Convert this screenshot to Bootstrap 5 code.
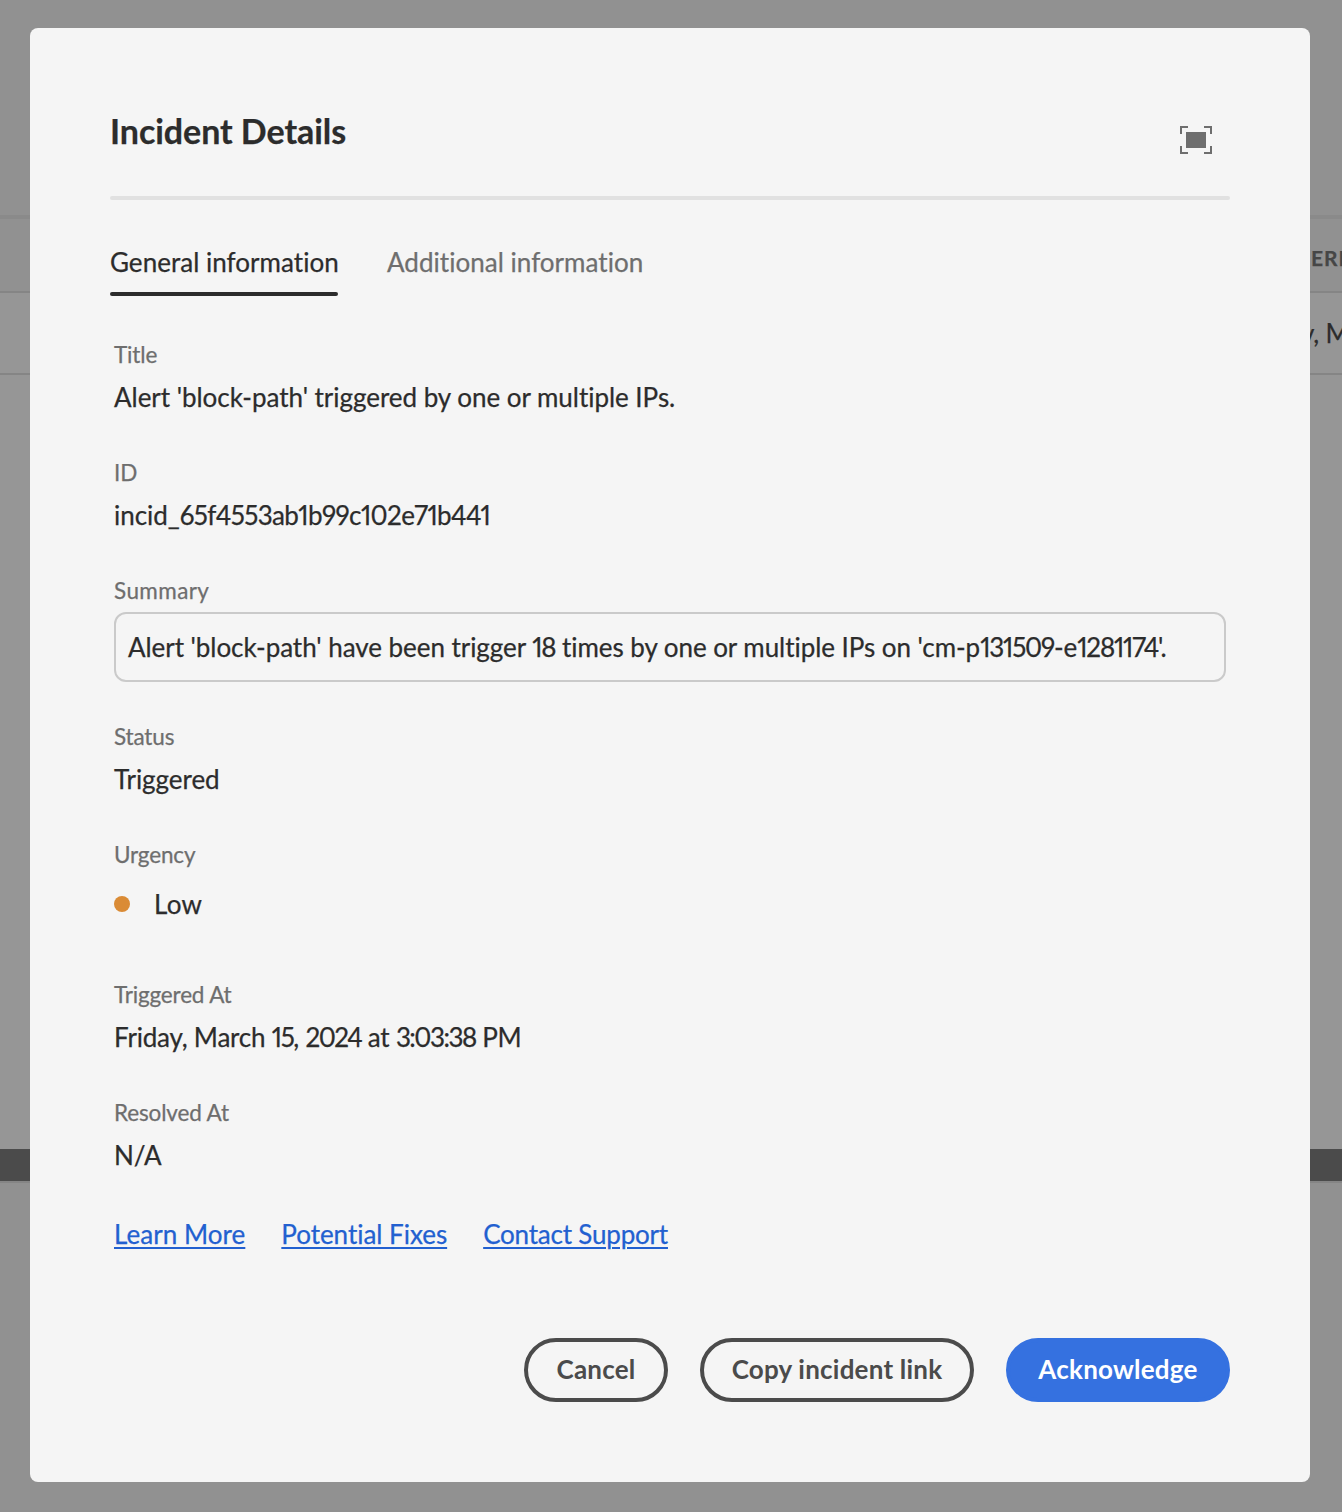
<!DOCTYPE html>
<html lang="en">
<head>
<meta charset="utf-8">
<meta name="viewport" content="width=device-width, initial-scale=1">
<title>Incident Details</title>
<link href="https://cdn.jsdelivr.net/npm/bootstrap@5.3.0/dist/css/bootstrap.min.css" rel="stylesheet">
<style>
  body { font-family: Lato, "Noto Sans", sans-serif; font-size: 26px; line-height: 36px; color: #2c2c2c; background: #919191; height: 1512px; font-variant-ligatures: none; letter-spacing: -.03px; -webkit-text-stroke: .25px currentColor; }
  .backdrop-page { height: 1512px; }
  .page-top { height: 219px; border-bottom: 4px solid #8a8a8a; }
  .head-row { height: 74px; border-bottom: 2px solid #858585; font-size: 21px; font-weight: 700; color: #464646; letter-spacing: .9px; padding-left: 1311px; padding-top: 5px; }
  .data-row { height: 82px; border-bottom: 2px solid #858585; background: #969696; padding-left: 1301px; letter-spacing: -.2px; }
  .table-rest { height: 774px; background: #969696; }
  .dark-bar { height: 34px; background: #4b4b4b; border-bottom: 2px solid #858585; }
  .overlay { inset: 0; padding: 28px 32px 30px 30px; }
  .dialog { width: 1280px; height: 1454px; border-radius: 8px; background: #f5f5f5; padding: 80px; }
  .dialog-head { height: 92px; border-radius: 2px; padding: 4px 18px 0 0; }
  .dialog-head h1 { font-size: 34px; line-height: 38px; font-weight: 700; letter-spacing: -.05px; }
  .expand-icon { margin-top: 14px; }
  .rule { height: 4px; border-radius: 2px; background: #e1e1e1; margin-top: -4px; }
  .tabs { gap: 49px; margin-top: 44px; }
  .tabs .nav-link { padding: 0; height: 52px; color: #6e6e6e; white-space: nowrap; letter-spacing: .03px; }
  .tabs .nav-link.active { color: #2c2c2c; width: 228px; }
  .tabs .nav-link.active::after { content: ""; display: block; height: 4px; border-radius: 2px; background: #2c2c2c; margin-top: 12px; }
  .details { padding: 44px 4px 0; }
  .field { margin-bottom: 43px; }
  .field dt { font-size: 22.5px; line-height: 30px; font-weight: 400; color: #6e6e6e; letter-spacing: -.15px; margin-bottom: 9px; }
  .field dd { margin: 0; white-space: nowrap; }
  .summary { margin-bottom: 40px; }
  .summary dt { margin-bottom: 6px; letter-spacing: .4px; }
  .summary dd { border: 2px solid #cacaca; border-radius: 12px; height: 70px; padding: 15px 12px; letter-spacing: -.05px; }
  .urgency { margin-bottom: 58px; }
  .urgency dt { margin-bottom: 16px; }
  .urgency dd { gap: 24px; letter-spacing: .3px; }
  .dot { width: 16px; height: 16px; background: #da8b35; }
  .num { font-variant-numeric: proportional-nums; letter-spacing: -1.2px; }
  .incident-id .num { letter-spacing: -.62px; }
  .stamp dd { letter-spacing: -.2px; }
  .stamp .num { letter-spacing: -1.5px; }
  .links { gap: 36px; }
  .links a { color: #2260d0; text-decoration-thickness: 2px; text-underline-offset: 3px; }
  .links a:first-child { letter-spacing: .05px; }
  .links a:last-child { letter-spacing: -.2px; }
  .actions { gap: 32px; margin-top: 86px; }
  .actions .btn { height: 64px; font-size: 26px; line-height: 30px; font-weight: 700; border: 4px solid #4b4b4b; color: #4b4b4b; padding: 0 0 3px; letter-spacing: .22px; white-space: nowrap; -webkit-text-stroke-width: 0; }
  .actions .btn.ack { background: #3571e0; border-color: #3571e0; color: #fff; width: 224px; }
  .w-cancel { width: 144px; }
  .w-copy { width: 274px; }
</style>
<script src="https://cdn.jsdelivr.net/npm/bootstrap@5.3.0/dist/js/bootstrap.bundle.min.js"></script>
</head>
<body class="overflow-hidden position-relative">
<div class="backdrop-page overflow-hidden" aria-hidden="true">
  <div class="page-top"></div>
  <div class="head-row d-flex align-items-center text-nowrap">ERI</div>
  <div class="data-row d-flex align-items-center text-nowrap">y, M</div>
  <div class="table-rest"></div>
  <div class="dark-bar"></div>
</div>
<div class="overlay position-absolute">
  <main class="dialog" role="dialog" aria-labelledby="dlg-title">
    <header class="dialog-head d-flex justify-content-between align-items-start">
      <h1 class="m-0" id="dlg-title">Incident Details</h1>
      <svg class="expand-icon" width="32" height="28" viewBox="0 0 32 28" fill="none" stroke="#6e6e6e" stroke-width="2">
        <path d="M1 8V1H8M24 1H31V8M31 20V27H24M8 27H1V20"/>
        <rect x="6" y="6" width="20" height="16" fill="#6e6e6e" stroke="none"/>
      </svg>
    </header>
    <div class="rule"></div>
    <nav class="nav tabs">
      <a class="nav-link active" href="#">General information</a>
      <a class="nav-link" href="#">Additional information</a>
    </nav>
    <div class="details">
      <dl class="m-0">
        <div class="field"><dt>Title</dt><dd>Alert 'block-path' triggered by one or multiple IPs.</dd></div>
        <div class="field incident-id"><dt>ID</dt><dd>incid_<span class="num">65f4553ab1b99c102e71b441</span></dd></div>
        <div class="field summary"><dt>Summary</dt><dd>Alert 'block-path' have been trigger <span class="num">18</span> times by one or multiple IPs on 'cm-p<span class="num">131509</span>-e<span class="num">1281174</span>'.</dd></div>
        <div class="field"><dt>Status</dt><dd>Triggered</dd></div>
        <div class="field urgency"><dt>Urgency</dt><dd class="d-flex align-items-center"><span class="dot rounded-circle"></span>Low</dd></div>
        <div class="field stamp"><dt>Triggered At</dt><dd>Friday, March <span class="num">15</span>, <span class="num">2024</span> at <span class="num">3:03:38</span> PM</dd></div>
        <div class="field"><dt>Resolved At</dt><dd>N/A</dd></div>
      </dl>
      <div class="links d-flex">
        <a href="#">Learn More</a><a href="#">Potential Fixes</a><a href="#">Contact Support</a>
      </div>
    </div>
    <footer class="actions d-flex justify-content-end">
      <button type="button" class="btn rounded-pill w-cancel">Cancel</button>
      <button type="button" class="btn rounded-pill w-copy">Copy incident link</button>
      <button type="button" class="btn rounded-pill ack">Acknowledge</button>
    </footer>
  </main>
</div>
</body>
</html>
